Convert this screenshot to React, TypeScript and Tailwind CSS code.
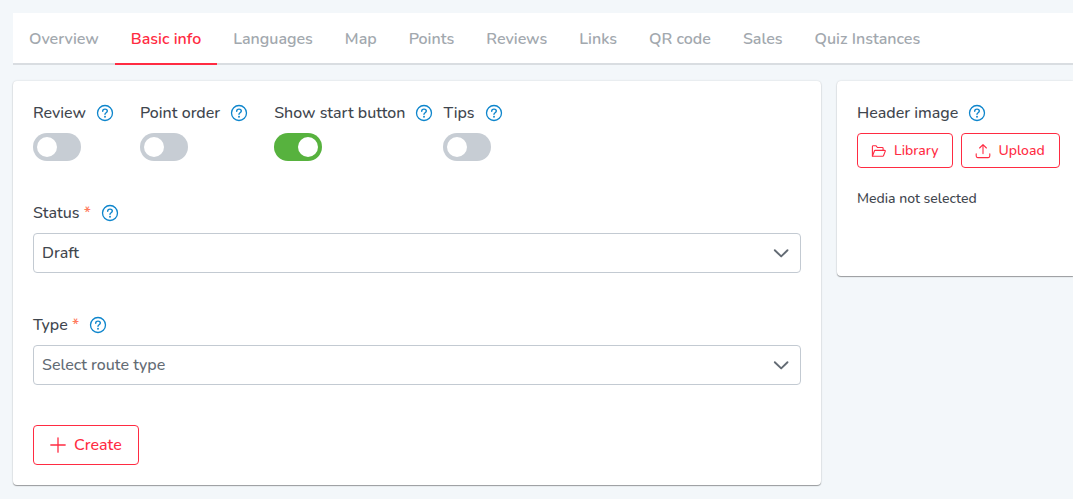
import { useId, useState } from "react";
import type { ReactNode } from "react";

const tabs = [
  "Overview",
  "Basic info",
  "Languages",
  "Map",
  "Points",
  "Reviews",
  "Links",
  "QR code",
  "Sales",
  "Quiz Instances",
];

function HelpIcon() {
  return (
    <svg viewBox="0 0 16 16" className="block size-4 shrink-0 overflow-visible" fill="none" stroke="currentColor" aria-hidden="true">
      <circle cx="8" cy="8" r="7.5" strokeWidth="1.3" />
      <path d="M5.7 6.2C5.7 4.9 6.7 4.1 8 4.1s2.3.8 2.3 2c0 1.6-2.3 1.6-2.3 3.1" strokeWidth="1.4" strokeLinecap="round" />
      <circle cx="8" cy="11.7" r="0.95" fill="currentColor" stroke="none" />
    </svg>
  );
}

function Help({ topic }: { topic: string }) {
  return (
    <button type="button" aria-label={"Help: " + topic} className="text-[#0d85cc]">
      <HelpIcon />
    </button>
  );
}

function Toggle({ label, initial = false }: { label: string; initial?: boolean }) {
  const id = useId();
  return (
    <div className="flex flex-col gap-2">
      <div className="flex items-center gap-[11px]">
        <label htmlFor={id}>{label}</label>
        <Help topic={label} />
      </div>
      <input
        id={id}
        type="checkbox"
        role="switch"
        defaultChecked={initial}
        className="h-7 w-12 cursor-pointer appearance-none rounded-full bg-[#c7cdd4] p-1 before:block before:size-5 before:rounded-full before:bg-white checked:bg-[#57b23e] checked:before:translate-x-5"
      />
    </div>
  );
}

function SelectField({
  label,
  value,
  options,
  placeholder,
}: {
  label: string;
  value: string;
  options: string[];
  placeholder?: string;
}) {
  const id = useId();
  const [current, setCurrent] = useState(value);
  return (
    <div className="flex flex-col gap-2">
      <div className="flex items-center gap-[11px]">
        <label htmlFor={id}>
          {label} <span className="text-[#ff7a5c]">*</span>
        </label>
        <Help topic={label} />
      </div>
      <div className="grid items-center">
        <select
          id={id}
          value={current}
          onChange={(e) => setCurrent(e.target.value)}
          className={
            "col-start-1 row-start-1 h-10 w-full appearance-none rounded border border-[#c3cad2] bg-white px-2 font-medium " +
            (current === "" ? "text-[#636b74]" : "text-[#3f464e]")
          }
        >
          {placeholder && <option value="">{placeholder}</option>}
          {options.map((o) => (
            <option key={o}>{o}</option>
          ))}
        </select>
        <svg
          viewBox="0 0 16 16"
          className="pointer-events-none col-start-1 row-start-1 mr-3 size-4 justify-self-end text-[#636b74]"
          fill="none"
          stroke="currentColor"
          strokeWidth="1.9"
          strokeLinecap="round"
          strokeLinejoin="round"
          aria-hidden="true"
        >
          <path d="M1.8 5.2 8.2 11.4l6.3-6.2" />
        </svg>
      </div>
    </div>
  );
}

function OutlineButton({ icon, children, small = false }: { icon: ReactNode; children: ReactNode; small?: boolean }) {
  return (
    <button
      type="button"
      className={
        "flex items-center gap-2 rounded border border-[#ff2b42] bg-white font-medium text-[#ff2b42] " +
        (small ? "h-[35px] px-[14px] text-[14px]" : "h-10 px-4 text-[16px]")
      }
    >
      {icon}
      {children}
    </button>
  );
}

function FolderIcon() {
  return (
    <svg viewBox="1 1 14 14" className="size-[14px] overflow-visible" fill="none" stroke="currentColor" strokeWidth="1.1" strokeLinejoin="round" aria-hidden="true">
      <path d="M1.4 13.2V3.5c0-.5.3-.8.8-.8h2.7l1.5 1.8h4.9c.5 0 .8.3.8.8v1.8" />
      <path d="M1.4 13.2 3.5 7.8c.1-.3.3-.4.6-.4h9.7c.4 0 .6.3.5.7l-1.8 4.6c-.1.3-.4.5-.7.5Z" />
    </svg>
  );
}

function UploadIcon() {
  return (
    <svg viewBox="1 1 14 14" className="size-[14px] overflow-visible" fill="none" stroke="currentColor" strokeWidth="1.1" strokeLinecap="round" strokeLinejoin="round" aria-hidden="true">
      <path d="M8 10.6V1.9M4.6 5 8 1.7 11.4 5" />
      <path d="M1.2 10.8v2.3c0 .9.6 1.5 1.5 1.5h10.6c.9 0 1.5-.6 1.5-1.5v-2.3" />
    </svg>
  );
}

function PlusIcon() {
  return (
    <svg viewBox="0 0 16 16" className="size-4" fill="none" stroke="currentColor" strokeWidth="1.3" strokeLinecap="round" aria-hidden="true">
      <path d="M8 .8v14.4M.8 8h14.4" />
    </svg>
  );
}

export default function App() {
  const [active, setActive] = useState("Basic info");
  return (
    <div className="min-h-screen bg-[#f3f7fa] pt-[13px] pb-[13px] pl-[13px] font-['Nunito','Lato',sans-serif] text-[16px] leading-6 font-medium text-[#3f464e]">
      <nav className="flex overflow-hidden bg-white font-semibold shadow-[inset_0_-2px_0_#d9dde1]">
        {tabs.map((tab) => (
          <a
            key={tab}
            href="#"
            onClick={(e) => {
              e.preventDefault();
              setActive(tab);
            }}
            aria-current={tab === active ? "page" : undefined}
            className={
              "flex h-[52px] items-center border-b-2 px-4 pt-[2px] whitespace-nowrap " +
              (tab === active ? "border-[#ff2b42] text-[#ff2b42]" : "border-transparent text-[#a2a8ae]")
            }
          >
            {tab}
          </a>
        ))}
      </nav>

      <main className="mt-4 grid grid-cols-[minmax(0,1fr)_236px] items-start gap-4">
        <form
          onSubmit={(e) => e.preventDefault()}
          className="flex flex-col items-stretch gap-10 rounded bg-white p-5 shadow-[0_1px_1px_rgba(0,0,0,0.35),0_0_2px_rgba(0,0,0,0.15)]"
        >
          <div className="flex">
            <div className="mr-[27px]">
              <Toggle label="Review" />
            </div>
            <div className="mr-[27px]">
              <Toggle label="Point order" />
            </div>
            <div className="mr-[11px]">
              <Toggle label="Show start button" initial />
            </div>
            <Toggle label="Tips" />
          </div>
          <SelectField label="Status" value="Draft" options={["Draft", "Published"]} />
          <SelectField label="Type" value="" placeholder="Select route type" options={["Walking", "Cycling"]} />
          <div className="flex">
            <OutlineButton icon={<PlusIcon />}>Create</OutlineButton>
          </div>
        </form>

        <section className="rounded-l bg-white pt-5 pb-[65px] pl-5 shadow-[0_1px_1px_rgba(0,0,0,0.35),0_0_2px_rgba(0,0,0,0.15)]">
          <div className="flex items-center gap-[11px]">
            <h2>Header image</h2>
            <Help topic="Header image" />
          </div>
          <div className="mt-2 flex gap-2">
            <OutlineButton small icon={<FolderIcon />}>
              Library
            </OutlineButton>
            <OutlineButton small icon={<UploadIcon />}>
              Upload
            </OutlineButton>
          </div>
          <p className="mt-[19px] text-[14px]">Media not selected</p>
        </section>
      </main>
    </div>
  );
}
